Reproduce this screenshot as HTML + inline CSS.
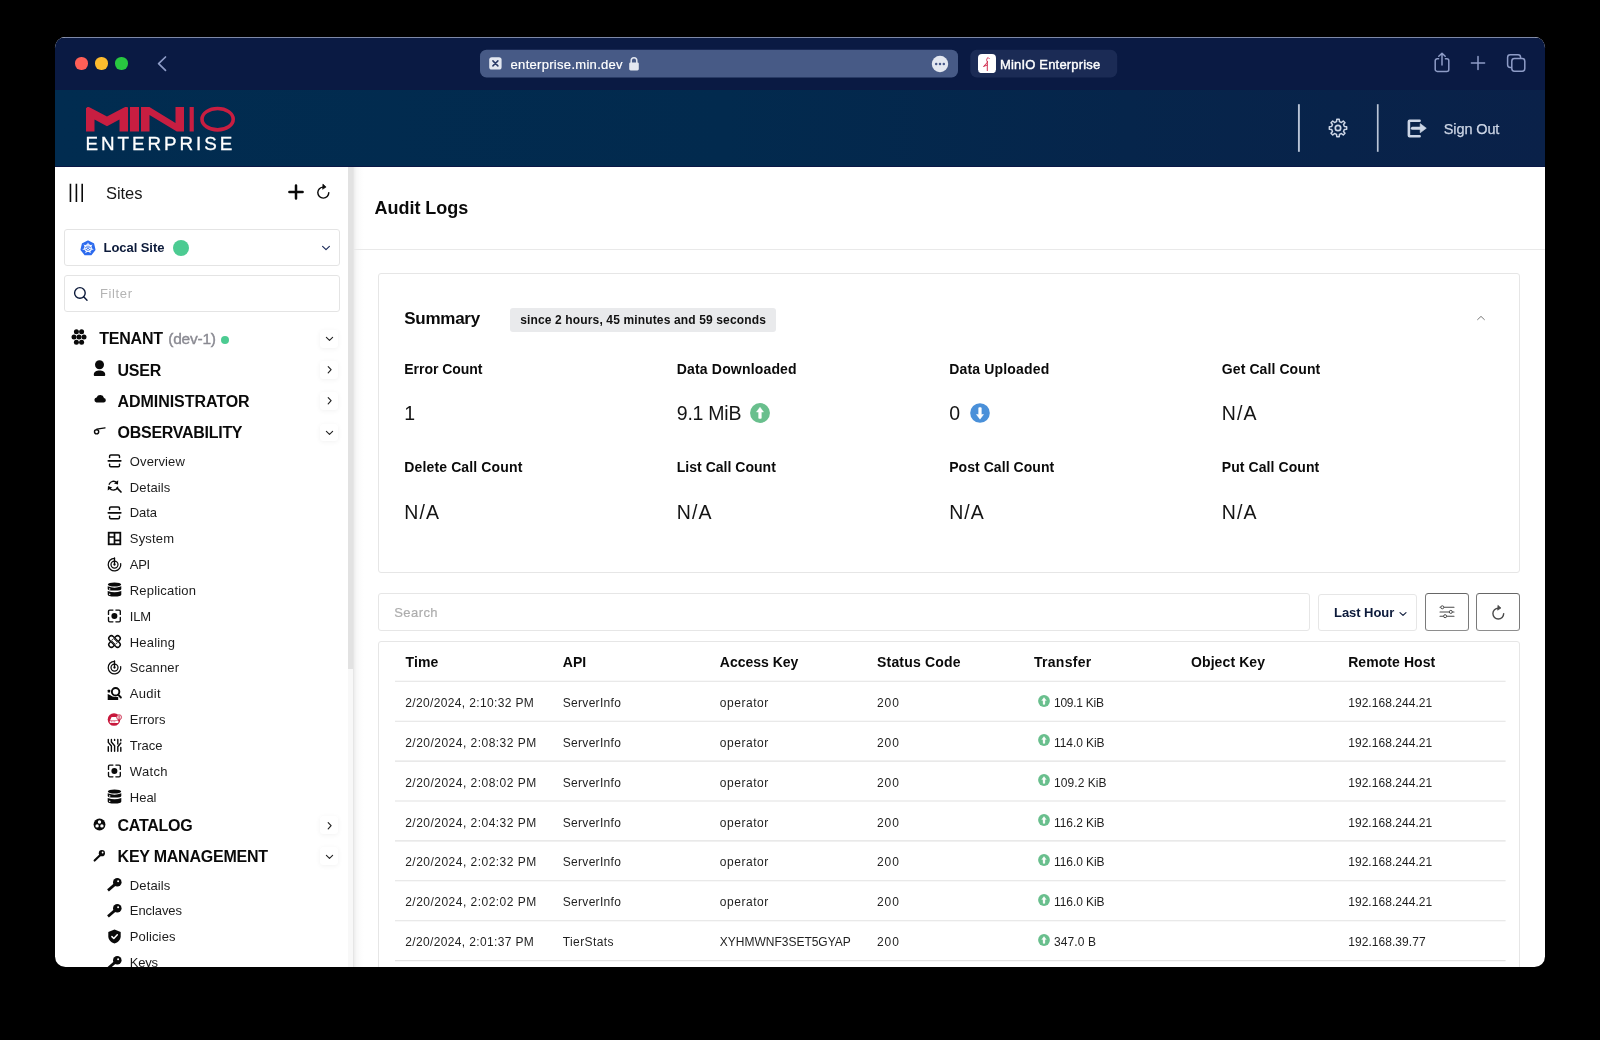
<!DOCTYPE html>
<html><head><meta charset="utf-8"><title>MinIO Enterprise</title><style>
html,body{margin:0;padding:0;background:#000;}
body{width:1600px;height:1040px;position:relative;overflow:hidden;font-family:"Liberation Sans",sans-serif;}
.t{position:absolute;white-space:nowrap;margin:0;padding:0;}
.r{position:absolute;box-sizing:border-box;}
#win{position:absolute;left:55px;top:37px;width:1490px;height:930px;border-radius:10.5px;overflow:hidden;background:#fff;}
#wrap{will-change:transform;position:absolute;left:-55px;top:-37px;width:1600px;height:1040px;}
</style></head><body>
<div id="win"><div id="wrap">
<div class="r" style="left:55px;top:37px;width:1490px;height:53px;background:#0a1a43;"></div>
<div class="r" style="left:55px;top:37px;width:1490px;height:1px;background:#7d88a8;"></div>
<div class="r" style="left:75.3px;top:57.3px;width:12.4px;height:12.4px;border-radius:50%;background:#ff5f57;"></div>
<div class="r" style="left:95.3px;top:57.3px;width:12.4px;height:12.4px;border-radius:50%;background:#febc2e;"></div>
<div class="r" style="left:115.3px;top:57.3px;width:12.4px;height:12.4px;border-radius:50%;background:#28c840;"></div>
<svg class="r" style="left:150px;top:52px;" width="24" height="24" viewBox="0 0 24 24"><path d="M15.5 5 L8.6 11.6 L15.5 18.4" fill="none" stroke="#8e9cc7" stroke-width="1.7" stroke-linecap="round" stroke-linejoin="round"/></svg>
<svg class="r" style="left:479px;top:48px;" width="481" height="31" viewBox="0 0 481 31"><rect x="1" y="1.7" width="478" height="27.7" rx="6.5" fill="#475a86"/></svg>
<svg class="r" style="left:489px;top:57.4px;" width="13" height="13" viewBox="0 0 13 13"><rect x="0.2" y="0.2" width="12.4" height="12.4" rx="2.6" fill="#e3e7f0"/><path d="M3.9 3.9 L8.9 8.9 M8.9 3.9 L3.9 8.9" stroke="#2a3a66" stroke-width="1.5" stroke-linecap="round"/></svg>
<div class="t" style="left:510.60px;top:58px;font-size:13px;line-height:13px;color:#fff;letter-spacing:0.298px;-webkit-text-stroke:0.2px #fff;">enterprise.min.dev</div>
<svg class="r" style="left:628px;top:56px;" width="12" height="16" viewBox="0 0 12 16"><path d="M3.2 7 V4.6 A2.8 2.8 0 0 1 8.8 4.6 V7" fill="none" stroke="#e3e7f0" stroke-width="1.5"/><rect x="1.2" y="6.4" width="9.6" height="8" rx="1.4" fill="#e3e7f0"/></svg>
<svg class="r" style="left:931px;top:55px;" width="18" height="18" viewBox="0 0 18 18"><circle cx="9" cy="9" r="8.2" fill="#e3e7f0"/><circle cx="5.2" cy="9" r="1.25" fill="#47598a"/><circle cx="9" cy="9" r="1.25" fill="#47598a"/><circle cx="12.8" cy="9" r="1.25" fill="#47598a"/></svg>
<svg class="r" style="left:969px;top:48px;" width="150" height="31" viewBox="0 0 150 31"><rect x="1.3" y="1.8" width="146.9" height="27.7" rx="6.5" fill="#1b2b55"/></svg>
<svg class="r" style="left:978px;top:53.8px;" width="18" height="19.4" viewBox="0 0 18 19.4"><rect x="0" y="0" width="18" height="19.2" rx="4" fill="#fff"/><path d="M9.3 7.4 V16.6 M9.3 7.6 C7.9 6.3 8.8 4.2 10.1 3.5 L11.3 4.7 M9.3 8.4 L5.5 12.5 L9.3 11.0" fill="none" stroke="#d0284a" stroke-width="0.95" stroke-linecap="round" stroke-linejoin="round"/></svg>
<div class="t" style="left:1000.00px;top:58px;font-size:13px;line-height:13px;color:#fff;letter-spacing:0.178px;-webkit-text-stroke:0.4px #fff;">MinIO Enterprise</div>
<svg class="r" style="left:1432px;top:50px;" width="20" height="24" viewBox="0 0 20 24"><path d="M6.6 8.8 H5.2 A2 2 0 0 0 3.2 10.8 V19.4 A2 2 0 0 0 5.2 21.4 H14.8 A2 2 0 0 0 16.8 19.4 V10.8 A2 2 0 0 0 14.8 8.8 H13.4" fill="none" stroke="#8e9cc7" stroke-width="1.5" stroke-linecap="round"/><path d="M10 15 V3.4 M6.8 6.2 L10 3.2 L13.2 6.2" fill="none" stroke="#8e9cc7" stroke-width="1.5" stroke-linecap="round" stroke-linejoin="round"/></svg>
<svg class="r" style="left:1468px;top:53px;" width="20" height="20" viewBox="0 0 20 20"><path d="M10 3.4 V16.6 M3.4 10 H16.6" stroke="#8e9cc7" stroke-width="1.5" stroke-linecap="round"/></svg>
<svg class="r" style="left:1505px;top:52px;" width="22" height="22" viewBox="0 0 22 22"><rect x="2.6" y="2.8" width="13" height="12.6" rx="2.6" fill="none" stroke="#8e9cc7" stroke-width="1.5"/><rect x="6.8" y="6.6" width="13" height="12.6" rx="2.6" fill="#0a1a43" stroke="#8e9cc7" stroke-width="1.5"/></svg>
<div class="r" style="left:55px;top:89.5px;width:1490px;height:76.8px;background:linear-gradient(90deg,#012c50 0%,#022a4e 45%,#06254b 72%,#0a2149 100%);"></div>
<div class="r" style="left:55px;top:165.6px;width:1490px;height:1px;background:#0a1745;"></div>
<svg class="r" style="left:86px;top:107px;overflow:visible;" width="150" height="25" viewBox="0 0 150 25"><path fill="#c81e41" d="M0.6 0.9 Q0.6 0 1.6 0 H2.6 Q3.2 0 3.9 0.4 L21 9.6 L38.1 0.4 Q38.8 0 39.4 0 H41 Q42 0 42 0.9 V24.5 H33.5 V12.4 L21 19.3 L8.5 12.4 V24.5 H0 V0.9 Z"/><rect fill="#c81e41" x="44" y="0" width="9" height="24.5"/><path fill="#c81e41" d="M55 0 H63.4 L89.5 16 V0 H98 V24.5 H90.8 L63.5 8 V24.5 H55 Z"/><rect fill="#c81e41" x="103.6" y="0" width="4.2" height="24.5"/><ellipse cx="131.6" cy="12.2" rx="15.6" ry="10.7" fill="none" stroke="#c81e41" stroke-width="3.6"/></svg>
<div class="t" style="left:85.60px;top:135px;font-size:18.8px;line-height:18.8px;color:#fff;letter-spacing:2.962px;-webkit-text-stroke:0.32px #fff;">ENTERPRISE</div>
<svg class="r" style="left:1296px;top:104px;" width="6" height="48" viewBox="0 0 6 48"><path d="M2.9 0.2 V47.8" stroke="#b9c4d6" stroke-width="1.9"/></svg>
<svg class="r" style="left:1375px;top:104px;" width="6" height="48" viewBox="0 0 6 48"><path d="M2.75 0.2 V47.8" stroke="#b9c4d6" stroke-width="1.7"/></svg>
<svg class="r" style="left:1326.1px;top:116.4px;" width="24" height="24" viewBox="0 0 24 24"><path d="M10.52 5.67 L10.78 3.34 L13.22 3.34 L13.48 5.67 L15.43 6.48 L17.26 5.01 L18.99 6.74 L17.52 8.57 L18.33 10.52 L20.66 10.78 L20.66 13.22 L18.33 13.48 L17.52 15.43 L18.99 17.26 L17.26 18.99 L15.43 17.52 L13.48 18.33 L13.22 20.66 L10.78 20.66 L10.52 18.33 L8.57 17.52 L6.74 18.99 L5.01 17.26 L6.48 15.43 L5.67 13.48 L3.34 13.22 L3.34 10.78 L5.67 10.52 L6.48 8.57 L5.01 6.74 L6.74 5.01 L8.57 6.48 Z" fill="none" stroke="#cdd6e6" stroke-width="1.5" stroke-linejoin="round"/><circle cx="12" cy="12" r="2.7" fill="none" stroke="#cdd6e6" stroke-width="1.7"/></svg>
<svg class="r" style="left:1405px;top:117px;" width="24" height="24" viewBox="0 0 24 24"><path d="M14.6 3.7 H4.6 Q3.9 3.7 3.9 4.4 V18.6 Q3.9 19.3 4.6 19.3 H14.6" fill="none" stroke="#cdd6e6" stroke-width="2.6" stroke-linecap="round"/><path d="M7.4 11.2 H15.6" stroke="#cdd6e6" stroke-width="3.1" stroke-linecap="round"/><path d="M15.2 6.6 L21.3 11.2 L15.2 15.8 Z" fill="#cdd6e6" stroke="#cdd6e6" stroke-width="0.6" stroke-linejoin="round"/></svg>
<div class="t" style="left:1443.80px;top:122px;font-size:14.5px;line-height:14.5px;color:#cdd6e6;letter-spacing:-0.117px;-webkit-text-stroke:0.25px #cdd6e6;">Sign Out</div>
<div class="r" style="left:348.2px;top:166.6px;width:5.4px;height:801px;background:#f8f8f8;"></div>
<div class="r" style="left:353.0px;top:166.6px;width:0.8px;height:801px;background:#e6e6e6;"></div>
<div class="r" style="left:348.2px;top:166.6px;width:5.3px;height:502.3px;background:#e2e2e2;"></div>
<div class="r" style="left:353.6px;top:166.6px;width:10px;height:801px;background:linear-gradient(90deg,#ededed 0%,#f7f7f7 25%,#fcfcfc 55%,#fff 100%);"></div>
<svg class="r" style="left:68px;top:182px;" width="18" height="22" viewBox="0 0 18 22"><path d="M2.45 1.7 V20.1 M8.4 1.7 V20.1 M14.2 1.7 V20.1" stroke="#0a0a0a" stroke-width="1.6"/></svg>
<div class="t" style="left:106.00px;top:185px;font-size:16.5px;line-height:16.5px;color:#161616;letter-spacing:-0.070px;">Sites</div>
<svg class="r" style="left:288px;top:184px;" width="16" height="16" viewBox="0 0 16 16"><path d="M8 1.4 V14.6 M1.4 8 H14.6" stroke="#0a0a0a" stroke-width="2.5" stroke-linecap="round"/></svg>
<svg class="r" style="left:314.5px;top:183px;" width="17" height="18" viewBox="0 0 17 18"><path d="M8.3 4.1 A5.5 5.5 0 1 0 13.8 9.6" fill="none" stroke="#0a0a0a" stroke-width="1.45" stroke-linecap="round"/><path d="M7.9 1.1 L11.1 4.0 L7.6 6.3 Z" fill="#0a0a0a" stroke="#0a0a0a" stroke-width="0.6" stroke-linejoin="round"/></svg>
<div class="r" style="left:64px;top:229.3px;width:276px;height:37px;border:1px solid #e4e4e4;border-radius:3px;background:#fff;"></div>
<svg class="r" style="left:79.55px;top:239.6px;" width="16" height="16.4" viewBox="0 0 16 16.4"><path d="M8.00 1.20 L13.47 3.84 L14.82 9.76 L11.04 14.51 L4.96 14.51 L1.18 9.76 L2.53 3.84 Z" fill="#2d6bee" stroke="#2d6bee" stroke-width="1.4" stroke-linejoin="round"/><circle cx="8" cy="8.2" r="3.3" fill="none" stroke="#fff" stroke-width="1.1"/><path d="M8 8.2 L8.00 3.20 M8 8.2 L11.91 5.08 M8 8.2 L12.87 9.31 M8 8.2 L10.17 12.70 M8 8.2 L5.83 12.70 M8 8.2 L3.13 9.31 M8 8.2 L4.09 5.08 " stroke="#fff" stroke-width="0.95" stroke-linecap="round"/><circle cx="8" cy="8.2" r="0.9" fill="#2d6bee"/></svg>
<div class="t" style="left:103.60px;top:241px;font-size:13px;line-height:13px;color:#0c1a3a;font-weight:700;letter-spacing:-0.067px;">Local Site</div>
<div class="r" style="left:173px;top:239.9px;width:16px;height:16px;border-radius:50%;background:#4ccb92;"></div>
<svg class="r" style="left:320px;top:242px;" width="12" height="12" viewBox="0 0 12 12"><path d="M2.6 4.4 L6 7.6 L9.4 4.4" fill="none" stroke="#1d2c5a" stroke-width="1.2" stroke-linecap="round" stroke-linejoin="round"/></svg>
<div class="r" style="left:64px;top:275.3px;width:276px;height:36.6px;border:1px solid #e4e4e4;border-radius:3px;background:#fff;"></div>
<svg class="r" style="left:73.2px;top:286px;" width="16" height="16" viewBox="0 0 16 16"><circle cx="6.9" cy="6.9" r="5.3" fill="none" stroke="#0c1a3a" stroke-width="1.4"/><path d="M10.7 10.8 L14.0 14.2" stroke="#0c1a3a" stroke-width="1.4" stroke-linecap="round"/></svg>
<div class="t" style="left:100.00px;top:287px;font-size:13px;line-height:13px;color:#b4b4b4;letter-spacing:0.623px;">Filter</div>
<svg class="r" style="left:70.9px;top:328.6px;" width="16" height="16" viewBox="0 0 16 16"><circle cx="5.4" cy="2.7" r="2.5" fill="#0a0a0a"/><circle cx="10.6" cy="2.7" r="2.5" fill="#0a0a0a"/><circle cx="3.0" cy="8" r="2.5" fill="#0a0a0a"/><circle cx="8" cy="8" r="2.5" fill="#0a0a0a"/><circle cx="13.0" cy="8" r="2.5" fill="#0a0a0a"/><circle cx="5.4" cy="13.3" r="2.5" fill="#0a0a0a"/><circle cx="10.6" cy="13.3" r="2.5" fill="#0a0a0a"/></svg>
<div class="t" style="left:99.20px;top:331px;font-size:16px;line-height:16px;color:#0a0a0a;font-weight:700;letter-spacing:-0.216px;">TENANT</div>
<div class="t" style="left:168.20px;top:331px;font-size:15.5px;line-height:15.5px;color:#8a8a92;letter-spacing:-0.215px;-webkit-text-stroke:0.4px #8a8a92;">(dev-1)</div>
<div class="r" style="left:221.3px;top:335.7px;width:8px;height:8px;border-radius:50%;background:#4ccb92;"></div>
<div class="r" style="left:320.2px;top:330.1px;width:17.8px;height:17.9px;background:#fff;border-radius:3px;box-shadow:0 1px 5px rgba(0,0,0,0.055),0 0 1px rgba(0,0,0,0.03);"></div>
<svg class="r" style="left:323.2px;top:332.3px;" width="13" height="13" viewBox="0 0 13 13"><path d="M3.4 5.4 L6.5 8.3 L9.6 5.4" fill="none" stroke="#222" stroke-width="1.15" stroke-linecap="round" stroke-linejoin="round"/></svg>
<svg class="r" style="left:92px;top:359px;" width="16" height="18" viewBox="0 0 16 18"><circle cx="7.5" cy="5.8" r="4.5" fill="#0a0a0a"/><path d="M2.6 16.9 H12.4 Q13.2 16.9 13.2 16.0 V15.4 C13.2 12.6 10.6 11.4 7.5 11.4 C4.4 11.4 1.8 12.6 1.8 15.4 V16.0 Q1.8 16.9 2.6 16.9 Z" fill="#0a0a0a"/></svg>
<div class="t" style="left:117.60px;top:363px;font-size:16px;line-height:16px;color:#0a0a0a;font-weight:700;letter-spacing:-0.280px;">USER</div>
<div class="r" style="left:320.2px;top:360.8px;width:17.8px;height:17.9px;background:#fff;border-radius:3px;box-shadow:0 1px 5px rgba(0,0,0,0.055),0 0 1px rgba(0,0,0,0.03);"></div>
<svg class="r" style="left:323.2px;top:363.0px;" width="13" height="13" viewBox="0 0 13 13"><path d="M5.2 3.6 L8.1 6.7 L5.2 9.8" fill="none" stroke="#222" stroke-width="1.15" stroke-linecap="round" stroke-linejoin="round"/></svg>
<svg class="r" style="left:92px;top:393px;" width="16" height="12" viewBox="0 0 16 12"><path d="M4.4 9.5 H11.6 A2.3 2.3 0 0 0 12.0 4.95 A3.9 3.9 0 0 0 4.6 4.4 A2.6 2.6 0 0 0 4.4 9.5 Z" fill="#0a0a0a"/></svg>
<div class="t" style="left:117.60px;top:394px;font-size:16px;line-height:16px;color:#0a0a0a;font-weight:700;letter-spacing:-0.061px;">ADMINISTRATOR</div>
<div class="r" style="left:320.2px;top:391.8px;width:17.8px;height:17.9px;background:#fff;border-radius:3px;box-shadow:0 1px 5px rgba(0,0,0,0.055),0 0 1px rgba(0,0,0,0.03);"></div>
<svg class="r" style="left:323.2px;top:394.0px;" width="13" height="13" viewBox="0 0 13 13"><path d="M5.2 3.6 L8.1 6.7 L5.2 9.8" fill="none" stroke="#222" stroke-width="1.15" stroke-linecap="round" stroke-linejoin="round"/></svg>
<svg class="r" style="left:92px;top:424px;" width="16" height="14" viewBox="0 0 16 14"><circle cx="4.6" cy="7.8" r="2.1" fill="none" stroke="#0a0a0a" stroke-width="1.4"/><path d="M4.8 5.1 L13.0 3.9" stroke="#0a0a0a" stroke-width="1.4" stroke-linecap="round"/></svg>
<div class="t" style="left:117.60px;top:425px;font-size:16px;line-height:16px;color:#0a0a0a;font-weight:700;letter-spacing:-0.280px;">OBSERVABILITY</div>
<div class="r" style="left:320.2px;top:423.6px;width:17.8px;height:17.9px;background:#fff;border-radius:3px;box-shadow:0 1px 5px rgba(0,0,0,0.055),0 0 1px rgba(0,0,0,0.03);"></div>
<svg class="r" style="left:323.2px;top:425.8px;" width="13" height="13" viewBox="0 0 13 13"><path d="M3.4 5.4 L6.5 8.3 L9.6 5.4" fill="none" stroke="#222" stroke-width="1.15" stroke-linecap="round" stroke-linejoin="round"/></svg>
<svg class="r" style="left:106.8px;top:453.25px;overflow:visible;" width="15" height="15" viewBox="0 0 15 15"><path d="M2.6 4.6 V3.3 Q2.6 2.0 3.9 2.0 H11.2 Q12.5 2.0 12.5 3.3 V4.6 M2.6 11.2 V12.5 Q2.6 13.8 3.9 13.8 H11.2 Q12.5 13.8 12.5 12.5 V11.2" fill="none" stroke="#0a0a0a" stroke-width="1.45" stroke-linecap="round"/><path d="M1.4 7.85 H13.7" stroke="#0a0a0a" stroke-width="1.9" stroke-linecap="round"/></svg>
<div class="t" style="left:129.80px;top:455px;font-size:13px;line-height:13px;color:#1c1c1c;letter-spacing:0.118px;">Overview</div>
<svg class="r" style="left:106.8px;top:479.08px;overflow:visible;" width="15" height="15" viewBox="0 0 15 15"><path d="M2.2 5.2 A4.6 4.6 0 0 1 9.8 3.6" fill="none" stroke="#0a0a0a" stroke-width="1.4" stroke-linecap="round"/><path d="M11.2 1.2 L11.0 5.6 L7.0 4.6 Z" fill="#0a0a0a"/><path d="M10.6 8.2 A4.6 4.6 0 0 1 2.6 9.2" fill="none" stroke="#0a0a0a" stroke-width="1.4" stroke-linecap="round"/><path d="M0.7 11.6 L1.0 7.1 L5.2 8.4 Z" fill="#0a0a0a"/><path d="M10.2 9.2 L14.0 13.0" stroke="#0a0a0a" stroke-width="1.7" stroke-linecap="round"/></svg>
<div class="t" style="left:129.80px;top:481px;font-size:13px;line-height:13px;color:#1c1c1c;letter-spacing:0.127px;">Details</div>
<svg class="r" style="left:106.8px;top:504.90999999999997px;overflow:visible;" width="15" height="15" viewBox="0 0 15 15"><path d="M2.6 4.6 V3.3 Q2.6 2.0 3.9 2.0 H11.2 Q12.5 2.0 12.5 3.3 V4.6 M2.6 11.2 V12.5 Q2.6 13.8 3.9 13.8 H11.2 Q12.5 13.8 12.5 12.5 V11.2" fill="none" stroke="#0a0a0a" stroke-width="1.45" stroke-linecap="round"/><path d="M1.4 7.85 H13.7" stroke="#0a0a0a" stroke-width="1.9" stroke-linecap="round"/></svg>
<div class="t" style="left:129.80px;top:506px;font-size:13px;line-height:13px;color:#1c1c1c;letter-spacing:-0.086px;">Data</div>
<svg class="r" style="left:106.8px;top:530.74px;overflow:visible;" width="15" height="15" viewBox="0 0 15 15"><rect x="1.7" y="1.7" width="11.6" height="11.6" fill="none" stroke="#0a0a0a" stroke-width="1.8"/><path d="M7.5 1.7 V13.3 M1.7 6.0 H7.5 M7.5 9.4 H13.3" stroke="#0a0a0a" stroke-width="1.7"/></svg>
<div class="t" style="left:129.80px;top:532px;font-size:13px;line-height:13px;color:#1c1c1c;letter-spacing:0.172px;">System</div>
<svg class="r" style="left:106.8px;top:556.5699999999999px;overflow:visible;" width="15" height="15" viewBox="0 0 15 15"><path d="M7.50 1.30 A6.3 6.3 0 1 0 13.70 6.51" fill="none" stroke="#0a0a0a" stroke-width="1.25" stroke-linecap="round"/><circle cx="7.5" cy="7.6" r="3.5" fill="none" stroke="#0a0a0a" stroke-width="1.25"/><path d="M7.5 7.6 V0.9" stroke="#0a0a0a" stroke-width="1.35" stroke-linecap="round"/><circle cx="7.5" cy="7.6" r="1.15" fill="#0a0a0a"/></svg>
<div class="t" style="left:129.80px;top:558px;font-size:13px;line-height:13px;color:#1c1c1c;letter-spacing:-0.280px;">API</div>
<svg class="r" style="left:106.8px;top:582.4px;overflow:visible;" width="15" height="15" viewBox="0 0 15 15"><ellipse cx="7.5" cy="2.5" rx="6.7" ry="1.95" fill="#0a0a0a"/><path d="M0.7 4.3 Q7.5 7.0 14.3 4.3 V7.0 Q14.3 8.6 7.5 8.6 Q0.7 8.6 0.7 7.0 Z" fill="#0a0a0a"/><path d="M0.7 9.0 Q7.5 11.4 14.3 9.0 V12.6 Q14.3 14.6 7.5 14.6 Q0.7 14.6 0.7 12.6 Z" fill="#0a0a0a"/><circle cx="2.7" cy="7.0" r="0.75" fill="#fff"/><circle cx="2.7" cy="12.2" r="0.75" fill="#fff"/></svg>
<div class="t" style="left:129.80px;top:584px;font-size:13px;line-height:13px;color:#1c1c1c;letter-spacing:0.189px;">Replication</div>
<svg class="r" style="left:106.8px;top:608.23px;overflow:visible;" width="15" height="15" viewBox="0 0 15 15"><path d="M1.5 6.4 V3.3 Q1.5 2.1 2.7 2.1 H5.9 M8.9 2.1 H12.1 Q13.3 2.1 13.3 3.3 V6.4 M13.3 9.4 V12.6 Q13.3 13.8 12.1 13.8 H8.9 M5.9 13.8 H2.7 Q1.5 13.8 1.5 12.6 V9.4" fill="none" stroke="#0a0a0a" stroke-width="1.35" stroke-linecap="round"/><circle cx="7.4" cy="8.0" r="3.0" fill="#0a0a0a"/></svg>
<div class="t" style="left:129.80px;top:610px;font-size:13px;line-height:13px;color:#1c1c1c;letter-spacing:-0.235px;">ILM</div>
<svg class="r" style="left:106.8px;top:634.06px;overflow:visible;" width="15" height="15" viewBox="0 0 15 15"><g transform="rotate(-45 7.5 7.5)"><rect x="0.5" y="4.9" width="14" height="5.2" rx="2.6" fill="#fff" stroke="#0a0a0a" stroke-width="1.45"/></g><g transform="rotate(45 7.5 7.5)"><rect x="0.5" y="4.9" width="14" height="5.2" rx="2.6" fill="#fff" stroke="#0a0a0a" stroke-width="1.45"/><rect x="4.6" y="6.1" width="5.8" height="2.8" rx="0.7" fill="#fff" stroke="#0a0a0a" stroke-width="0.75"/></g></svg>
<div class="t" style="left:129.80px;top:636px;font-size:13px;line-height:13px;color:#1c1c1c;letter-spacing:0.186px;">Healing</div>
<svg class="r" style="left:106.8px;top:659.89px;overflow:visible;" width="15" height="15" viewBox="0 0 15 15"><path d="M7.50 1.30 A6.3 6.3 0 1 0 13.70 6.51" fill="none" stroke="#0a0a0a" stroke-width="1.25" stroke-linecap="round"/><circle cx="7.5" cy="7.6" r="3.5" fill="none" stroke="#0a0a0a" stroke-width="1.25"/><path d="M7.5 7.6 V0.9" stroke="#0a0a0a" stroke-width="1.35" stroke-linecap="round"/><circle cx="7.5" cy="7.6" r="1.15" fill="#0a0a0a"/></svg>
<div class="t" style="left:129.80px;top:661px;font-size:13px;line-height:13px;color:#1c1c1c;letter-spacing:0.131px;">Scanner</div>
<svg class="r" style="left:106.8px;top:685.72px;overflow:visible;" width="15" height="15" viewBox="0 0 15 15"><circle cx="8.6" cy="5.8" r="3.75" fill="#fff" stroke="#0a0a0a" stroke-width="1.9"/><path d="M11.4 8.8 L13.9 11.5" stroke="#0a0a0a" stroke-width="1.9" stroke-linecap="round"/><rect x="0.7" y="3.8" width="2.5" height="2.8" rx="0.5" fill="#0a0a0a"/><path d="M0.7 7.9 L3.0 9.0 L5.4 10.4 L8.2 11.0 L11.2 10.9 V14.0 H0.7 Z" fill="#0a0a0a"/></svg>
<div class="t" style="left:129.80px;top:687px;font-size:13px;line-height:13px;color:#1c1c1c;letter-spacing:0.268px;">Audit</div>
<svg class="r" style="left:106.8px;top:711.55px;overflow:visible;" width="15" height="15" viewBox="0 0 15 15"><circle cx="7.0" cy="7.5" r="6.3" fill="#c8183c"/><path d="M4.6 4.9 H9.6 L11.0 8.1 H3.2 Z" fill="#fff"/><rect x="2.8" y="8.6" width="8.6" height="2.3" rx="0.6" fill="#fff"/><path d="M3.8 9.8 H8.8" stroke="#c8183c" stroke-width="0.7" stroke-dasharray="1.1 0.6"/><circle cx="12.1" cy="5.2" r="2.5" fill="#f3d3da" stroke="#c8183c" stroke-width="0.7"/><path d="M12.1 3.9 V5.5 M12.1 6.4 V6.6" stroke="#c8183c" stroke-width="0.8" stroke-linecap="round"/></svg>
<div class="t" style="left:129.80px;top:713px;font-size:13px;line-height:13px;color:#1c1c1c;letter-spacing:0.063px;">Errors</div>
<svg class="r" style="left:106.8px;top:737.38px;overflow:visible;" width="15" height="15" viewBox="0 0 15 15"><path d="M1.3 2.4 V5.4 L4.4 9.0 V14.3 M4.4 2.4 V5.0 L7.6 8.8 V14.3 M1.3 9.6 V14.3 M7.6 2.4 V3.4 M10.8 2.4 V7.0 M13.8 6.0 L10.8 9.8 V14.3 M13.8 2.4 V3.8 M13.8 10.4 V14.3" fill="none" stroke="#0a0a0a" stroke-width="1.4" stroke-linecap="round" stroke-linejoin="round"/></svg>
<div class="t" style="left:129.80px;top:739px;font-size:13px;line-height:13px;color:#1c1c1c;letter-spacing:-0.011px;">Trace</div>
<svg class="r" style="left:106.8px;top:763.21px;overflow:visible;" width="15" height="15" viewBox="0 0 15 15"><path d="M1.5 6.4 V3.3 Q1.5 2.1 2.7 2.1 H5.9 M8.9 2.1 H12.1 Q13.3 2.1 13.3 3.3 V6.4 M13.3 9.4 V12.6 Q13.3 13.8 12.1 13.8 H8.9 M5.9 13.8 H2.7 Q1.5 13.8 1.5 12.6 V9.4" fill="none" stroke="#0a0a0a" stroke-width="1.35" stroke-linecap="round"/><circle cx="7.4" cy="8.0" r="3.0" fill="#0a0a0a"/></svg>
<div class="t" style="left:129.80px;top:765px;font-size:13px;line-height:13px;color:#1c1c1c;letter-spacing:0.335px;">Watch</div>
<svg class="r" style="left:106.8px;top:789.04px;overflow:visible;" width="15" height="15" viewBox="0 0 15 15"><ellipse cx="7.5" cy="2.5" rx="6.7" ry="1.95" fill="#0a0a0a"/><path d="M0.7 4.3 Q7.5 7.0 14.3 4.3 V7.0 Q14.3 8.6 7.5 8.6 Q0.7 8.6 0.7 7.0 Z" fill="#0a0a0a"/><path d="M0.7 9.0 Q7.5 11.4 14.3 9.0 V12.6 Q14.3 14.6 7.5 14.6 Q0.7 14.6 0.7 12.6 Z" fill="#0a0a0a"/><circle cx="2.7" cy="7.0" r="0.75" fill="#fff"/><circle cx="2.7" cy="12.2" r="0.75" fill="#fff"/></svg>
<div class="t" style="left:129.80px;top:791px;font-size:13px;line-height:13px;color:#1c1c1c;letter-spacing:-0.012px;">Heal</div>
<svg class="r" style="left:92px;top:817.4px;" width="15" height="15" viewBox="0 0 15 15"><circle cx="7.5" cy="7.5" r="5.9" fill="#0a0a0a"/><circle cx="7.5" cy="5.0" r="1.7" fill="#fff"/><circle cx="5.1" cy="8.9" r="1.7" fill="#fff"/><circle cx="9.9" cy="8.9" r="1.7" fill="#fff"/></svg>
<div class="t" style="left:117.60px;top:818px;font-size:16px;line-height:16px;color:#0a0a0a;font-weight:700;letter-spacing:-0.280px;">CATALOG</div>
<div class="r" style="left:320.2px;top:816.3px;width:17.8px;height:17.9px;background:#fff;border-radius:3px;box-shadow:0 1px 5px rgba(0,0,0,0.055),0 0 1px rgba(0,0,0,0.03);"></div>
<svg class="r" style="left:323.2px;top:818.5px;" width="13" height="13" viewBox="0 0 13 13"><path d="M5.2 3.6 L8.1 6.7 L5.2 9.8" fill="none" stroke="#222" stroke-width="1.15" stroke-linecap="round" stroke-linejoin="round"/></svg>
<svg class="r" style="left:92px;top:848px;" width="16" height="16" viewBox="0 0 16 16"><path d="M2.6 12.6 L7.8 7.4" stroke="#0a0a0a" stroke-width="2.1" stroke-linecap="round"/><circle cx="9.9" cy="5.2" r="3.1" fill="#0a0a0a"/><circle cx="10.6" cy="4.5" r="0.9" fill="#fff"/></svg>
<div class="t" style="left:117.60px;top:849px;font-size:16px;line-height:16px;color:#0a0a0a;font-weight:700;letter-spacing:-0.238px;">KEY MANAGEMENT</div>
<div class="r" style="left:320.2px;top:847.3px;width:17.8px;height:17.9px;background:#fff;border-radius:3px;box-shadow:0 1px 5px rgba(0,0,0,0.055),0 0 1px rgba(0,0,0,0.03);"></div>
<svg class="r" style="left:323.2px;top:849.5px;" width="13" height="13" viewBox="0 0 13 13"><path d="M3.4 5.4 L6.5 8.3 L9.6 5.4" fill="none" stroke="#222" stroke-width="1.15" stroke-linecap="round" stroke-linejoin="round"/></svg>
<svg class="r" style="left:106.8px;top:877.2px;overflow:visible;" width="15" height="15" viewBox="0 0 15 15"><path d="M2.0 12.6 L8.4 7.0" stroke="#0a0a0a" stroke-width="2.7" stroke-linecap="square"/><circle cx="10.3" cy="5.3" r="4.25" fill="#0a0a0a"/><circle cx="11.1" cy="4.3" r="1.0" fill="#fff"/></svg>
<div class="t" style="left:129.80px;top:879px;font-size:13px;line-height:13px;color:#1c1c1c;letter-spacing:0.127px;">Details</div>
<svg class="r" style="left:106.8px;top:903.0300000000001px;overflow:visible;" width="15" height="15" viewBox="0 0 15 15"><path d="M2.0 12.6 L8.4 7.0" stroke="#0a0a0a" stroke-width="2.7" stroke-linecap="square"/><circle cx="10.3" cy="5.3" r="4.25" fill="#0a0a0a"/><circle cx="11.1" cy="4.3" r="1.0" fill="#fff"/></svg>
<div class="t" style="left:129.80px;top:904px;font-size:13px;line-height:13px;color:#1c1c1c;letter-spacing:-0.078px;">Enclaves</div>
<svg class="r" style="left:106.8px;top:928.86px;overflow:visible;" width="15" height="15" viewBox="0 0 15 15"><path d="M7.5 0.6 L13.7 2.9 V7.2 C13.7 10.8 11.0 13.2 7.5 14.6 C4.0 13.2 1.3 10.8 1.3 7.2 V2.9 Z" fill="#0a0a0a"/><path d="M4.9 7.6 L6.8 9.5 L10.3 5.7" fill="none" stroke="#fff" stroke-width="1.5" stroke-linecap="round" stroke-linejoin="round"/></svg>
<div class="t" style="left:129.80px;top:930px;font-size:13px;line-height:13px;color:#1c1c1c;letter-spacing:0.129px;">Policies</div>
<svg class="r" style="left:106.8px;top:954.69px;overflow:visible;" width="15" height="15" viewBox="0 0 15 15"><path d="M2.0 12.6 L8.4 7.0" stroke="#0a0a0a" stroke-width="2.7" stroke-linecap="square"/><circle cx="10.3" cy="5.3" r="4.25" fill="#0a0a0a"/><circle cx="11.1" cy="4.3" r="1.0" fill="#fff"/></svg>
<div class="t" style="left:129.80px;top:956px;font-size:13px;line-height:13px;color:#1c1c1c;letter-spacing:-0.234px;">Keys</div>
<div class="t" style="left:374.60px;top:199px;font-size:18px;line-height:18px;color:#0a0a0a;font-weight:700;letter-spacing:-0.042px;">Audit Logs</div>
<div class="r" style="left:354px;top:248.6px;width:1191px;height:1px;background:#e9e9e9;"></div>
<div class="r" style="left:378px;top:273.2px;width:1142.4px;height:299.4px;border:1px solid #e6e6e6;border-radius:3px;background:#fff;"></div>
<div class="t" style="left:404.20px;top:310px;font-size:17px;line-height:17px;color:#0a0a0a;font-weight:700;letter-spacing:-0.247px;">Summary</div>
<div class="r" style="left:510.2px;top:308px;width:265.6px;height:24px;background:#e9eaec;border-radius:3px;"></div>
<div class="t" style="left:520.20px;top:314px;font-size:12px;line-height:12px;color:#111;font-weight:700;letter-spacing:0.142px;">since 2 hours, 45 minutes and 59 seconds</div>
<svg class="r" style="left:1475px;top:312px;" width="12" height="12" viewBox="0 0 12 12"><path d="M2.6 7.6 L6 4.4 L9.4 7.6" fill="none" stroke="#7a7a7a" stroke-width="1.0" stroke-linecap="round" stroke-linejoin="round"/></svg>
<div class="t" style="left:404.30px;top:362px;font-size:14px;line-height:14px;color:#0a0a0a;font-weight:700;letter-spacing:-0.035px;">Error Count</div>
<div class="t" style="left:676.80px;top:362px;font-size:14px;line-height:14px;color:#0a0a0a;font-weight:700;letter-spacing:0.168px;">Data Downloaded</div>
<div class="t" style="left:949.20px;top:362px;font-size:14px;line-height:14px;color:#0a0a0a;font-weight:700;letter-spacing:0.166px;">Data Uploaded</div>
<div class="t" style="left:1221.80px;top:362px;font-size:14px;line-height:14px;color:#0a0a0a;font-weight:700;letter-spacing:0.091px;">Get Call Count</div>
<div class="t" style="left:404.30px;top:460px;font-size:14px;line-height:14px;color:#0a0a0a;font-weight:700;letter-spacing:0.132px;">Delete Call Count</div>
<div class="t" style="left:676.80px;top:460px;font-size:14px;line-height:14px;color:#0a0a0a;font-weight:700;letter-spacing:0.017px;">List Call Count</div>
<div class="t" style="left:949.20px;top:460px;font-size:14px;line-height:14px;color:#0a0a0a;font-weight:700;letter-spacing:0.056px;">Post Call Count</div>
<div class="t" style="left:1221.80px;top:460px;font-size:14px;line-height:14px;color:#0a0a0a;font-weight:700;letter-spacing:0.075px;">Put Call Count</div>
<div class="t" style="left:404.30px;top:404px;font-size:19.5px;line-height:19.5px;color:#141414;">1</div>
<div class="t" style="left:676.80px;top:404px;font-size:19.5px;line-height:19.5px;color:#141414;letter-spacing:-0.251px;">9.1 MiB</div>
<div class="t" style="left:949.20px;top:404px;font-size:19.5px;line-height:19.5px;color:#141414;">0</div>
<div class="t" style="left:1221.80px;top:404px;font-size:19.5px;line-height:19.5px;color:#141414;letter-spacing:1.046px;">N/A</div>
<div class="t" style="left:404.30px;top:503px;font-size:19.5px;line-height:19.5px;color:#141414;letter-spacing:1.046px;">N/A</div>
<div class="t" style="left:676.80px;top:503px;font-size:19.5px;line-height:19.5px;color:#141414;letter-spacing:1.046px;">N/A</div>
<div class="t" style="left:949.20px;top:503px;font-size:19.5px;line-height:19.5px;color:#141414;letter-spacing:1.046px;">N/A</div>
<div class="t" style="left:1221.80px;top:503px;font-size:19.5px;line-height:19.5px;color:#141414;letter-spacing:1.046px;">N/A</div>
<svg class="r" style="left:749.85px;top:402.8px;" width="20" height="20" viewBox="0 0 20 20"><circle cx="10" cy="10" r="9.95" fill="#69bf8d"/><path d="M10 4.3 L13.5 9.0 H11.35 V14.9 Q11.35 15.5 10.75 15.5 H9.25 Q8.65 15.5 8.65 14.9 V9.0 H6.5 Z" fill="#fff" stroke="#fff" stroke-width="0.5" stroke-linejoin="round"/></svg>
<svg class="r" style="left:970.1px;top:402.8px;" width="20" height="20" viewBox="0 0 20 20"><circle cx="10" cy="10" r="9.8" fill="#4a90d9"/><path d="M10 16.2 L13.5 11.5 H11.35 V5.1 Q11.35 4.5 10.75 4.5 H9.25 Q8.65 4.5 8.65 5.1 V11.5 H6.5 Z" fill="#fff" stroke="#fff" stroke-width="0.5" stroke-linejoin="round"/></svg>
<div class="r" style="left:378px;top:592.8px;width:931.6px;height:38px;border:1px solid #e6e6e6;border-radius:3px;background:#fff;"></div>
<div class="t" style="left:394.20px;top:606px;font-size:13px;line-height:13px;color:#adadad;letter-spacing:0.442px;-webkit-text-stroke:0.2px #adadad;">Search</div>
<div class="r" style="left:1318.2px;top:594px;width:98.4px;height:37.4px;border:1px solid #e6e6e6;border-radius:3px;background:#fff;"></div>
<div class="t" style="left:1334.00px;top:606px;font-size:13px;line-height:13px;color:#0c1a3a;font-weight:700;letter-spacing:-0.058px;">Last Hour</div>
<svg class="r" style="left:1397px;top:607.5px;" width="12" height="12" viewBox="0 0 12 12"><path d="M3 4.6 L6 7.4 L9 4.6" fill="none" stroke="#0c1a3a" stroke-width="1.1" stroke-linecap="round" stroke-linejoin="round"/></svg>
<div class="r" style="left:1425px;top:592.6px;width:43.8px;height:38.6px;border:1px solid #7a7a7a;border-top-color:#666;border-bottom-color:#8e8e8e;border-radius:3.5px;background:#fff;"></div>
<div class="r" style="left:1476.4px;top:592.6px;width:43.8px;height:38.6px;border:1px solid #7a7a7a;border-top-color:#666;border-bottom-color:#8e8e8e;border-radius:3.5px;background:#fff;"></div>
<svg class="r" style="left:1439px;top:604.2px;" width="16" height="16" viewBox="0 0 16 16"><path d="M1 3.3 H1.8 M4.8 3.3 H15 M1 7.9 H10.2 M13.4 7.9 H15 M1 12.2 H4.6 M7.6 12.2 H15" stroke="#4a4a4a" stroke-width="1.05" stroke-linecap="round"/><circle cx="3.3" cy="3.3" r="1.5" fill="#fff" stroke="#4a4a4a" stroke-width="1"/><circle cx="11.8" cy="7.9" r="1.5" fill="#fff" stroke="#4a4a4a" stroke-width="1"/><circle cx="6.1" cy="12.2" r="1.5" fill="#fff" stroke="#4a4a4a" stroke-width="1"/></svg>
<svg class="r" style="left:1490.1px;top:603.7px;" width="17" height="18" viewBox="0 0 17 18"><path d="M8.3 4.2 A5.4 5.4 0 1 0 13.7 9.6" fill="none" stroke="#4a4a4a" stroke-width="1.4" stroke-linecap="round"/><path d="M7.9 1.3 L11.0 4.0 L7.6 6.2 Z" fill="#4a4a4a" stroke="#4a4a4a" stroke-width="0.6" stroke-linejoin="round"/></svg>
<div class="r" style="left:378px;top:641.3px;width:1142.4px;height:340px;border:1px solid #e6e6e6;border-radius:3px;background:#fff;"></div>
<div class="t" style="left:405.40px;top:655px;font-size:14px;line-height:14px;color:#0a0a0a;font-weight:700;letter-spacing:0.193px;">Time</div>
<div class="t" style="left:562.80px;top:655px;font-size:14px;line-height:14px;color:#0a0a0a;font-weight:700;letter-spacing:0.031px;">API</div>
<div class="t" style="left:719.80px;top:655px;font-size:14px;line-height:14px;color:#0a0a0a;font-weight:700;letter-spacing:-0.001px;">Access Key</div>
<div class="t" style="left:877.00px;top:655px;font-size:14px;line-height:14px;color:#0a0a0a;font-weight:700;letter-spacing:0.193px;">Status Code</div>
<div class="t" style="left:1034.00px;top:655px;font-size:14px;line-height:14px;color:#0a0a0a;font-weight:700;letter-spacing:0.279px;">Transfer</div>
<div class="t" style="left:1191.00px;top:655px;font-size:14px;line-height:14px;color:#0a0a0a;font-weight:700;letter-spacing:0.096px;">Object Key</div>
<div class="t" style="left:1348.20px;top:655px;font-size:14px;line-height:14px;color:#0a0a0a;font-weight:700;letter-spacing:0.066px;">Remote Host</div>
<svg class="r" style="left:395px;top:670px;" width="1111" height="300" viewBox="0 0 1111 300"><path d="M0 11.30 H1110.6" stroke="#e2e2e2" stroke-width="1.1"/><path d="M0 51.20 H1110.6" stroke="#e2e2e2" stroke-width="1.1"/><path d="M0 91.10 H1110.6" stroke="#e2e2e2" stroke-width="1.1"/><path d="M0 131.00 H1110.6" stroke="#e2e2e2" stroke-width="1.1"/><path d="M0 170.90 H1110.6" stroke="#e2e2e2" stroke-width="1.1"/><path d="M0 210.80 H1110.6" stroke="#e2e2e2" stroke-width="1.1"/><path d="M0 250.70 H1110.6" stroke="#e2e2e2" stroke-width="1.1"/><path d="M0 290.60 H1110.6" stroke="#e2e2e2" stroke-width="1.1"/></svg>
<div class="t" style="left:405.20px;top:697px;font-size:12px;line-height:12px;color:#1f1f1f;letter-spacing:0.359px;">2/20/2024, 2:10:32 PM</div>
<div class="t" style="left:562.80px;top:697px;font-size:12px;line-height:12px;color:#1f1f1f;letter-spacing:0.294px;">ServerInfo</div>
<div class="t" style="left:719.80px;top:697px;font-size:12px;line-height:12px;color:#1f1f1f;letter-spacing:0.530px;">operator</div>
<div class="t" style="left:877.00px;top:697px;font-size:12px;line-height:12px;color:#1f1f1f;letter-spacing:0.890px;">200</div>
<svg class="r" style="left:1037.6px;top:694.5px;" width="12" height="12" viewBox="0 0 12 12"><circle cx="6" cy="6" r="5.9" fill="#69bf8d"/><path d="M6 2.5 L8.35 5.6 H6.95 V9.0 Q6.95 9.4 6.55 9.4 H5.45 Q5.05 9.4 5.05 9.0 V5.6 H3.65 Z" fill="#fff" stroke="#fff" stroke-width="0.3" stroke-linejoin="round"/></svg>
<div class="t" style="left:1054.00px;top:697px;font-size:12px;line-height:12px;color:#1f1f1f;letter-spacing:-0.254px;">109.1 KiB</div>
<div class="t" style="left:1348.20px;top:697px;font-size:12px;line-height:12px;color:#1f1f1f;letter-spacing:0.046px;">192.168.244.21</div>
<div class="t" style="left:405.20px;top:737px;font-size:12px;line-height:12px;color:#1f1f1f;letter-spacing:0.479px;">2/20/2024, 2:08:32 PM</div>
<div class="t" style="left:562.80px;top:737px;font-size:12px;line-height:12px;color:#1f1f1f;letter-spacing:0.294px;">ServerInfo</div>
<div class="t" style="left:719.80px;top:737px;font-size:12px;line-height:12px;color:#1f1f1f;letter-spacing:0.530px;">operator</div>
<div class="t" style="left:877.00px;top:737px;font-size:12px;line-height:12px;color:#1f1f1f;letter-spacing:0.890px;">200</div>
<svg class="r" style="left:1037.6px;top:734.35px;" width="12" height="12" viewBox="0 0 12 12"><circle cx="6" cy="6" r="5.9" fill="#69bf8d"/><path d="M6 2.5 L8.35 5.6 H6.95 V9.0 Q6.95 9.4 6.55 9.4 H5.45 Q5.05 9.4 5.05 9.0 V5.6 H3.65 Z" fill="#fff" stroke="#fff" stroke-width="0.3" stroke-linejoin="round"/></svg>
<div class="t" style="left:1054.00px;top:737px;font-size:12px;line-height:12px;color:#1f1f1f;letter-spacing:-0.068px;">114.0 KiB</div>
<div class="t" style="left:1348.20px;top:737px;font-size:12px;line-height:12px;color:#1f1f1f;letter-spacing:0.046px;">192.168.244.21</div>
<div class="t" style="left:405.20px;top:777px;font-size:12px;line-height:12px;color:#1f1f1f;letter-spacing:0.479px;">2/20/2024, 2:08:02 PM</div>
<div class="t" style="left:562.80px;top:777px;font-size:12px;line-height:12px;color:#1f1f1f;letter-spacing:0.294px;">ServerInfo</div>
<div class="t" style="left:719.80px;top:777px;font-size:12px;line-height:12px;color:#1f1f1f;letter-spacing:0.530px;">operator</div>
<div class="t" style="left:877.00px;top:777px;font-size:12px;line-height:12px;color:#1f1f1f;letter-spacing:0.890px;">200</div>
<svg class="r" style="left:1037.6px;top:774.2px;" width="12" height="12" viewBox="0 0 12 12"><circle cx="6" cy="6" r="5.9" fill="#69bf8d"/><path d="M6 2.5 L8.35 5.6 H6.95 V9.0 Q6.95 9.4 6.55 9.4 H5.45 Q5.05 9.4 5.05 9.0 V5.6 H3.65 Z" fill="#fff" stroke="#fff" stroke-width="0.3" stroke-linejoin="round"/></svg>
<div class="t" style="left:1054.00px;top:777px;font-size:12px;line-height:12px;color:#1f1f1f;letter-spacing:0.071px;">109.2 KiB</div>
<div class="t" style="left:1348.20px;top:777px;font-size:12px;line-height:12px;color:#1f1f1f;letter-spacing:0.046px;">192.168.244.21</div>
<div class="t" style="left:405.20px;top:817px;font-size:12px;line-height:12px;color:#1f1f1f;letter-spacing:0.479px;">2/20/2024, 2:04:32 PM</div>
<div class="t" style="left:562.80px;top:817px;font-size:12px;line-height:12px;color:#1f1f1f;letter-spacing:0.294px;">ServerInfo</div>
<div class="t" style="left:719.80px;top:817px;font-size:12px;line-height:12px;color:#1f1f1f;letter-spacing:0.530px;">operator</div>
<div class="t" style="left:877.00px;top:817px;font-size:12px;line-height:12px;color:#1f1f1f;letter-spacing:0.890px;">200</div>
<svg class="r" style="left:1037.6px;top:814.05px;" width="12" height="12" viewBox="0 0 12 12"><circle cx="6" cy="6" r="5.9" fill="#69bf8d"/><path d="M6 2.5 L8.35 5.6 H6.95 V9.0 Q6.95 9.4 6.55 9.4 H5.45 Q5.05 9.4 5.05 9.0 V5.6 H3.65 Z" fill="#fff" stroke="#fff" stroke-width="0.3" stroke-linejoin="round"/></svg>
<div class="t" style="left:1054.00px;top:817px;font-size:12px;line-height:12px;color:#1f1f1f;letter-spacing:-0.068px;">116.2 KiB</div>
<div class="t" style="left:1348.20px;top:817px;font-size:12px;line-height:12px;color:#1f1f1f;letter-spacing:0.046px;">192.168.244.21</div>
<div class="t" style="left:405.20px;top:856px;font-size:12px;line-height:12px;color:#1f1f1f;letter-spacing:0.479px;">2/20/2024, 2:02:32 PM</div>
<div class="t" style="left:562.80px;top:856px;font-size:12px;line-height:12px;color:#1f1f1f;letter-spacing:0.294px;">ServerInfo</div>
<div class="t" style="left:719.80px;top:856px;font-size:12px;line-height:12px;color:#1f1f1f;letter-spacing:0.530px;">operator</div>
<div class="t" style="left:877.00px;top:856px;font-size:12px;line-height:12px;color:#1f1f1f;letter-spacing:0.890px;">200</div>
<svg class="r" style="left:1037.6px;top:853.9px;" width="12" height="12" viewBox="0 0 12 12"><circle cx="6" cy="6" r="5.9" fill="#69bf8d"/><path d="M6 2.5 L8.35 5.6 H6.95 V9.0 Q6.95 9.4 6.55 9.4 H5.45 Q5.05 9.4 5.05 9.0 V5.6 H3.65 Z" fill="#fff" stroke="#fff" stroke-width="0.3" stroke-linejoin="round"/></svg>
<div class="t" style="left:1054.00px;top:856px;font-size:12px;line-height:12px;color:#1f1f1f;letter-spacing:-0.068px;">116.0 KiB</div>
<div class="t" style="left:1348.20px;top:856px;font-size:12px;line-height:12px;color:#1f1f1f;letter-spacing:0.046px;">192.168.244.21</div>
<div class="t" style="left:405.20px;top:896px;font-size:12px;line-height:12px;color:#1f1f1f;letter-spacing:0.479px;">2/20/2024, 2:02:02 PM</div>
<div class="t" style="left:562.80px;top:896px;font-size:12px;line-height:12px;color:#1f1f1f;letter-spacing:0.294px;">ServerInfo</div>
<div class="t" style="left:719.80px;top:896px;font-size:12px;line-height:12px;color:#1f1f1f;letter-spacing:0.530px;">operator</div>
<div class="t" style="left:877.00px;top:896px;font-size:12px;line-height:12px;color:#1f1f1f;letter-spacing:0.890px;">200</div>
<svg class="r" style="left:1037.6px;top:893.75px;" width="12" height="12" viewBox="0 0 12 12"><circle cx="6" cy="6" r="5.9" fill="#69bf8d"/><path d="M6 2.5 L8.35 5.6 H6.95 V9.0 Q6.95 9.4 6.55 9.4 H5.45 Q5.05 9.4 5.05 9.0 V5.6 H3.65 Z" fill="#fff" stroke="#fff" stroke-width="0.3" stroke-linejoin="round"/></svg>
<div class="t" style="left:1054.00px;top:896px;font-size:12px;line-height:12px;color:#1f1f1f;letter-spacing:-0.068px;">116.0 KiB</div>
<div class="t" style="left:1348.20px;top:896px;font-size:12px;line-height:12px;color:#1f1f1f;letter-spacing:0.046px;">192.168.244.21</div>
<div class="t" style="left:405.20px;top:936px;font-size:12px;line-height:12px;color:#1f1f1f;letter-spacing:0.359px;">2/20/2024, 2:01:37 PM</div>
<div class="t" style="left:562.80px;top:936px;font-size:12px;line-height:12px;color:#1f1f1f;letter-spacing:0.379px;">TierStats</div>
<div class="t" style="left:719.80px;top:936px;font-size:12px;line-height:12px;color:#1f1f1f;letter-spacing:-0.009px;">XYHMWNF3SET5GYAP</div>
<div class="t" style="left:877.00px;top:936px;font-size:12px;line-height:12px;color:#1f1f1f;letter-spacing:0.890px;">200</div>
<svg class="r" style="left:1037.6px;top:933.6px;" width="12" height="12" viewBox="0 0 12 12"><circle cx="6" cy="6" r="5.9" fill="#69bf8d"/><path d="M6 2.5 L8.35 5.6 H6.95 V9.0 Q6.95 9.4 6.55 9.4 H5.45 Q5.05 9.4 5.05 9.0 V5.6 H3.65 Z" fill="#fff" stroke="#fff" stroke-width="0.3" stroke-linejoin="round"/></svg>
<div class="t" style="left:1054.00px;top:936px;font-size:12px;line-height:12px;color:#1f1f1f;letter-spacing:0.106px;">347.0 B</div>
<div class="t" style="left:1348.20px;top:936px;font-size:12px;line-height:12px;color:#1f1f1f;letter-spacing:0.056px;">192.168.39.77</div>
</div></div>
</body></html>
